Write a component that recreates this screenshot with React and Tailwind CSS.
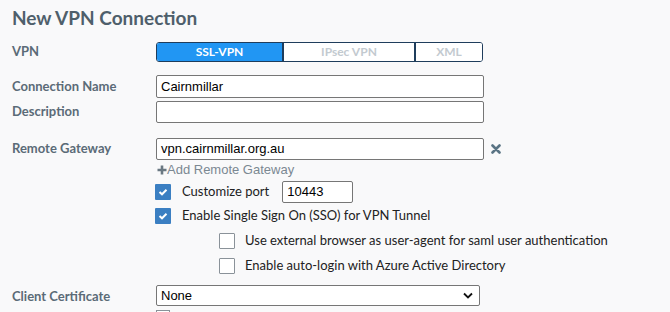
export default function App() {
  const label = "w-[156px] shrink-0 pl-3 text-[13px] font-bold text-[#5b6b77]";
  const inputCls =
    "border border-[#767676] rounded-[2px] bg-white px-[4px] text-[13px] text-black flex items-center shrink-0";
  const arial = { fontFamily: "'Liberation Sans', Arial, sans-serif" };
  const Check = ({ checked }) =>
    checked ? (
      <div className="w-[16px] h-[16px] shrink-0 bg-[#3b7fc2] rounded-[1px] flex items-center justify-center">
        <svg width="10" height="8" viewBox="0 0 10 8">
          <path d="M1.5 4 L4 6.3 L8.5 1.7" stroke="white" strokeWidth="2" fill="none" />
        </svg>
      </div>
    ) : (
      <div className="w-[16px] h-[16px] shrink-0 bg-white border border-[#8a9299] rounded-[1px]" />
    );
  return (
    <div
      className="w-[670px] h-[312px] overflow-hidden bg-[#f9f9fa] flex flex-col [&>*]:shrink-0"
      style={{ fontFamily: "Lato, 'Liberation Sans', sans-serif" }}
    >
      <div className="pl-3 h-[42px] pt-[5px] text-[19px] font-bold text-[#4f5f6b] leading-[26px]">
        New VPN Connection
      </div>
      <div className="flex items-center h-[20px]">
        <div className={label}>VPN</div>
        <div className="flex h-[20px] w-[327px] border border-[#1f3d5c] rounded-[3px] overflow-hidden text-[12px] font-bold">
          <div className="w-[125px] bg-[#2196f3] text-white flex items-center justify-center">SSL-VPN</div>
          <div className="w-[132px] bg-white text-[#c3cad0] border-l-2 border-[#1f3d5c] flex items-center justify-center">
            IPsec VPN
          </div>
          <div className="flex-1 bg-white text-[#c3cad0] border-l-2 border-[#1f3d5c] flex items-center justify-center">
            XML
          </div>
        </div>
      </div>
      <div className="flex items-center mt-[13px] h-[23px]">
        <div className={label}>Connection Name</div>
        <div className={inputCls + " w-[328px] h-[23px]"} style={arial}>
          Cairnmillar
        </div>
      </div>
      <div className="flex items-center mt-[3px] h-[22px]">
        <div className={label}>Description</div>
        <div className={inputCls + " w-[328px] h-[22px]"} />
      </div>
      <div className="flex items-center mt-[15px] h-[22px]">
        <div className={label}>Remote Gateway</div>
        <div className={inputCls + " w-[328px] h-[22px]"} style={arial}>
          vpn.cairnmillar.org.au
        </div>
        <svg className="ml-[7px]" width="10" height="10" viewBox="0 0 10 10">
          <path d="M1.5 1.5 L8.5 8.5 M8.5 1.5 L1.5 8.5" stroke="#5a7484" strokeWidth="2.6" strokeLinecap="round" />
        </svg>
      </div>
      <div className="flex items-center pl-[157px] h-[18px] mt-[1px] text-[13px] text-[#7b8892]" style={arial}>
        <svg width="10" height="10" viewBox="0 0 10 10" className="mr-[0px]">
          <path d="M5 0.5 V9.5 M0.5 5 H9.5" stroke="#6a7882" strokeWidth="2.6" />
        </svg>
        Add Remote Gateway
      </div>
      <div className="flex items-center pl-[155px] mt-[2px] h-[22px]">
        <Check checked />
        <span className="ml-[11px] text-[13px] text-[#222]">Customize port</span>
        <div className={inputCls + " ml-[13px] w-[71px] h-[22px]"} style={arial}>
          10443
        </div>
      </div>
      <div className="flex items-center pl-[155px] mt-[1px] h-[23px]">
        <Check checked />
        <span className="ml-[11px] text-[13px] text-[#222]">Enable Single Sign On (SSO) for VPN Tunnel</span>
      </div>
      <div className="flex items-center pl-[219px] mt-[2px] h-[23px]">
        <Check />
        <span className="ml-[10px] text-[13px] text-[#222]">Use external browser as user-agent for saml user authentication</span>
      </div>
      <div className="flex items-center pl-[219px] mt-[2px] h-[23px]">
        <Check />
        <span className="ml-[10px] text-[13px] text-[#222]">Enable auto-login with Azure Active Directory</span>
      </div>
      <div className="flex items-center mt-[8px] h-[21px]">
        <div className={label + " pt-[3px]"}>Client Certificate</div>
        <div className={inputCls + " w-[324px] h-[21px] justify-between pr-[6px] text-[13.5px]"} style={arial}>
          <span>None</span>
          <svg width="10" height="7" viewBox="0 0 10 7">
            <path d="M1 1.5 L5 5.5 L9 1.5" stroke="#111" strokeWidth="1.8" fill="none" />
          </svg>
        </div>
      </div>
      <div className="pl-[156px] mt-[4px]">
        <div className="w-[14px] h-[14px] bg-white border border-[#8a9299]" />
      </div>
    </div>
  );
}
